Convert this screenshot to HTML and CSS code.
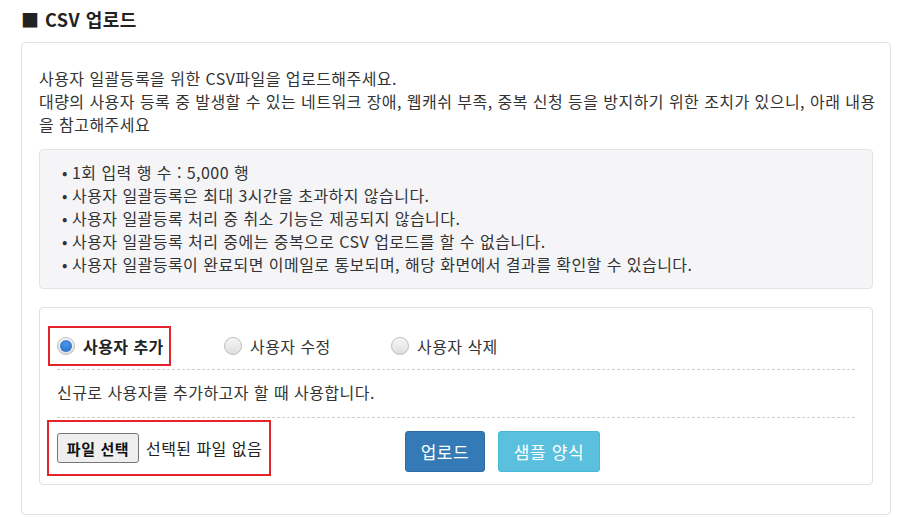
FILE: index.html
```html
<!DOCTYPE html>
<html lang="ko">
<head>
<meta charset="utf-8">
<title>CSV 업로드</title>
<link rel="stylesheet" href="styles.css">
</head>
<body>
<h2 class="title">■ CSV 업로드</h2>
<div class="panel">
  <p class="intro">사용자 일괄등록을 위한 CSV파일을 업로드해주세요.<br>대량의 사용자 등록 중 발생할 수 있는 네트워크 장애, 웹캐쉬 부족, 중복 신청 등을 방지하기 위한 조치가 있으니, 아래 내용<br>을 참고해주세요</p>
  <ul class="notice">
    <li>1회 입력 행 수 : 5,000 행</li>
    <li>사용자 일괄등록은 최대 3시간을 초과하지 않습니다.</li>
    <li>사용자 일괄등록 처리 중 취소 기능은 제공되지 않습니다.</li>
    <li>사용자 일괄등록 처리 중에는 중복으로 CSV 업로드를 할 수 없습니다.</li>
    <li>사용자 일괄등록이 완료되면 이메일로 통보되며, 해당 화면에서 결과를 확인할 수 있습니다.</li>
  </ul>
  <div class="form-panel">
    <div class="radio-row">
      <div class="radio-cell">
        <label class="radio-item highlight"><span class="radio checked"></span><span class="radio-label bold">사용자 추가</span></label>
      </div>
      <div class="radio-cell">
        <label class="radio-item"><span class="radio"></span><span class="radio-label">사용자 수정</span></label>
      </div>
      <div class="radio-cell">
        <label class="radio-item"><span class="radio"></span><span class="radio-label">사용자 삭제</span></label>
      </div>
    </div>
    <div class="desc-row">신규로 사용자를 추가하고자 할 때 사용합니다.</div>
    <div class="action-row">
      <div class="file-col">
        <div class="file-box highlight">
          <span class="file-btn">파일 선택</span>
          <span class="file-name">선택된 파일 없음</span>
        </div>
      </div>
      <div class="btns">
        <span class="btn btn-primary">업로드</span>
        <span class="btn btn-info">샘플 양식</span>
      </div>
    </div>
  </div>
</div>
</body>
</html>
```

FILE: styles.css
```css
* { box-sizing: border-box; }
html, body { margin: 0; padding: 0; background: #fff; }
body {
  font-family: "Noto Sans CJK KR", "Noto Sans", sans-serif;
  font-size: 16px;
  letter-spacing: 0.45px;
  color: #333;
  width: 905px;
}
.title {
  margin: 0;
  height: 42px;
  padding-left: 21px;
  line-height: 38px;
  font-size: 18px;
  letter-spacing: 0.5px;
  font-weight: bold;
  color: #222;
}
.panel {
  margin-left: 21px;
  width: 870px;
  border: 1px solid #e0e0e5;
  border-radius: 4px;
  padding: 0 17px 29px 17px;
}
.intro {
  margin: 0;
  padding-top: 24px;
  line-height: 23px;
  white-space: nowrap;
}
.notice {
  list-style: none;
  margin: 13px 0 0 0;
  padding: 11px 20px 12px 22px;
  background: #f5f5f8;
  border: 1px solid #e3e3e8;
  border-radius: 4px;
  line-height: 23px;
}
.notice li { position: relative; padding-left: 10px; }
.notice li::before {
  content: "•";
  position: absolute;
  left: 0;
  top: 0;
}
.form-panel {
  margin-top: 18px;
  border: 1px solid #e0e0e5;
  border-radius: 4px;
  padding: 0 17px;
}
.radio-row {
  display: grid;
  grid-template-columns: 167px 167px 167px;
  padding-top: 18px;
  height: 62px;
  border-bottom: 1px dashed #cfcfcf;
}
.radio-item {
  display: inline-flex;
  align-items: center;
  height: 40px;
  gap: 8px;
}
.radio-item.highlight {
  margin-left: -9px;
  padding: 0 5px 0 7px;
  border: 2px solid #e3242b;
}
.radio {
  width: 18px;
  height: 18px;
  border-radius: 50%;
  border: 1px solid #bdbdbd;
  background: linear-gradient(#f7f7f7, #dedede);
  position: relative;
  flex: none;
}
.radio.checked::after {
  content: "";
  position: absolute;
  left: 2px;
  top: 2px;
  width: 12px;
  height: 12px;
  border-radius: 50%;
  background: radial-gradient(circle at 50% 35%, #4d95e6, #1f6cc7);
}
.bold { font-weight: bold; color: #222; }
.desc-row {
  height: 48px;
  padding-top: 11px;
  line-height: 23px;
  border-bottom: 1px dashed #cfcfcf;
}
.action-row {
  display: flex;
  align-items: flex-start;
  padding: 2px 0 8px 0;
}
.file-col { flex: 0 0 348px; }
.file-box {
  display: inline-flex;
  align-items: center;
  height: 56px;
  margin-left: -10px;
  padding: 0 7px 0 8px;
  border: 2px solid #e3242b;
  gap: 7px;
}
.file-btn {
  display: inline-flex;
  align-items: center;
  justify-content: center;
  width: 82px;
  height: 30px;
  background: #efefef;
  border: 1px solid #767676;
  border-radius: 3px;
  font-size: 15px;
  letter-spacing: 0.6px;
  font-weight: bold;
  color: #111;
}
.file-name { color: #222; }
.btns {
  display: flex;
  gap: 13px;
  margin-top: 11px;
}
.btn {
  display: inline-flex;
  align-items: center;
  justify-content: center;
  height: 41px;
  border-radius: 3px;
  color: #fff;
  font-size: 17px;
  letter-spacing: 0.6px;
}
.btn-primary {
  width: 80px;
  background: #337ab7;
  border: 1px solid #2e6da4;
}
.btn-info {
  width: 102px;
  background: #5bc0de;
  border: 1px solid #46b8da;
}
```
